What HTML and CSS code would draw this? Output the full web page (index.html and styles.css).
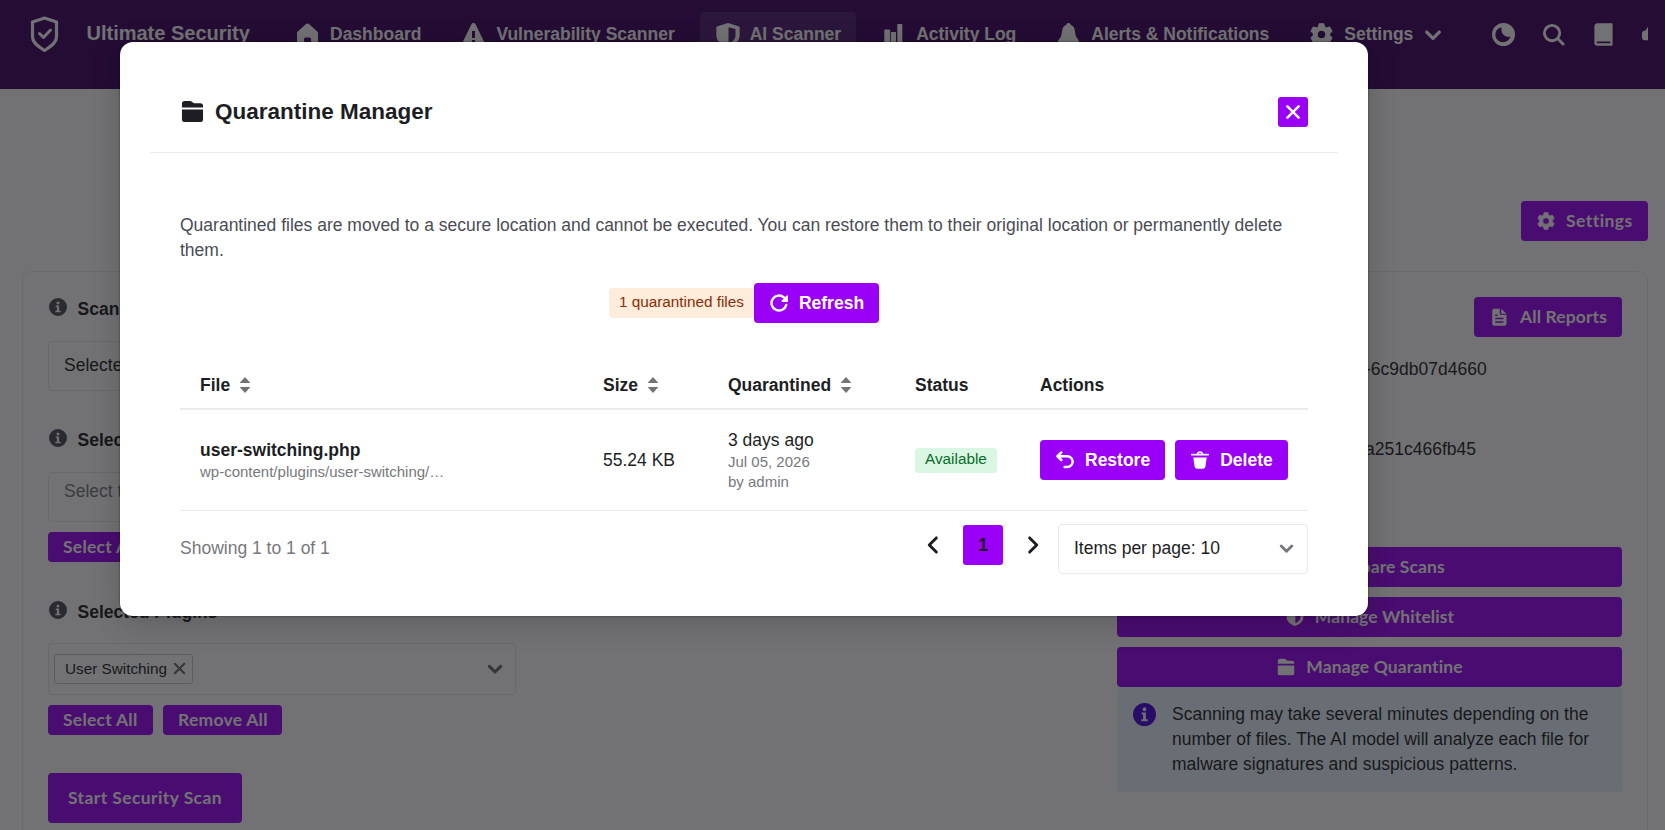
FILE: index.html
```html
<!DOCTYPE html>
<html lang="en">
<head>
<meta charset="utf-8">
<title>Ultimate Security</title>
<link rel="stylesheet" href="styles.css">
</head>
<body>
<svg class="sprite" aria-hidden="true">
  <symbol id="gear" viewBox="0.700 0.700 22.600 22.600"><path fill-rule="evenodd" d="M9.7 1.5h4.6l.7 3.1 2 1.1 3-1 2.3 4-2.3 2.2v2.2l2.3 2.2-2.3 4-3-1-2 1.1-.7 3.1H9.700l-.7-3.100-2-1.100-3 1-2.300-4L4 13.100v-2.200L1.700 8.700l2.300-4 3 1 2-1.100zM12 7.800a4.200 4.200 0 1 0 0 8.400 4.200 4.200 0 0 0 0-8.400z" stroke="currentColor" stroke-width="1" stroke-linejoin="round"/></symbol>
  <symbol id="info" viewBox="0 0 24 24"><path fill-rule="evenodd" d="M12 0a12 12 0 1 0 0 24 12 12 0 0 0 0-24zM12 4.500a2 2 0 1 1 0 4 2 2 0 0 1 0-4zM9 10h4.500v7H15.500v2H8.500v-2h2v-5H9z"/></symbol>
  <symbol id="folder" viewBox="0 0 24 24"><path d="M1 4a3 3 0 0 1 3-3h5c1.500 0 2.200.6 3.300 1.500C13.200 3.200 14 3.500 15 3.500h5a3 3 0 0 1 3 3v1.300H1zM1 10h22v10.500a2.500 2.500 0 0 1-2.500 2.500h-17A2.500 2.500 0 0 1 1 20.500z"/></symbol>
  <symbol id="chev" viewBox="0 0 24 24"><path d="M4.500 8.500 12 16l7.500-7.500" fill="none" stroke="currentColor" stroke-width="4" stroke-linecap="round" stroke-linejoin="round"/></symbol>
  <symbol id="chev-wide" viewBox="0 0 24 24"><path d="M3.500 8 12 16.500 20.500 8" fill="none" stroke="currentColor" stroke-width="3.500" stroke-linecap="round" stroke-linejoin="round"/></symbol>
  <symbol id="cross" viewBox="0 0 24 24"><path d="M4.500 4.500l15 15M19.500 4.500l-15 15" fill="none" stroke="currentColor" stroke-width="3.400" stroke-linecap="round"/></symbol>
  <symbol id="sort" viewBox="0 0 10 16"><path d="M5 0 9.800 5.200a.5.5 0 0 1-.4.9H.6a.5.5 0 0 1-.4-.9zM5 16 .2 10.800a.5.5 0 0 1 .4-.9h8.800a.5.5 0 0 1 .4.9z"/></symbol>
  <symbol id="shield" viewBox="0 0 24 24"><path fill-rule="evenodd" d="M12 .5 22 3.500c.8.300 1.200.8 1.200 1.600V12c0 6-4.700 9.500-11.200 12C5.500 21.500.8 18 .8 12V5.100c0-.8.400-1.300 1.200-1.600zM12.500 4.500v15.800c4.500-2 6.700-4.500 6.700-8.300V6.200z"/></symbol>
</svg>

<div class="page">
  <header class="topbar">
    <svg class="logo" viewBox="0 0 28 36"><path d="M14 2 26 6v15c0 5-4 8.500-12 13.500C6 29.500 2 26 2 21V6z" fill="none" stroke="currentColor" stroke-width="3.200" stroke-linejoin="round"/><path d="m9 17.500 4 4 7-7.500" fill="none" stroke="currentColor" stroke-width="3" stroke-linecap="round" stroke-linejoin="round"/></svg>
    <span class="brand">Ultimate Security</span>
    <nav class="nav">
      <a class="nav-item"><svg viewBox="0 0 25 25"><path d="M12.500 1.500c.8 0 1.300.3 2 .9l7.500 6.800c.8.700 1 1.300 1 2.300V21a2 2 0 0 1-2 2h-5v-6a1.500 1.500 0 0 0-1.500-1.500h-4A1.500 1.500 0 0 0 9 17v6H4a2 2 0 0 1-2-2v-9.500c0-1 .2-1.600 1-2.300l7.500-6.800c.7-.6 1.200-.9 2-.9z"/></svg>Dashboard</a>
      <a class="nav-item"><svg viewBox="0 0 25 25"><path fill-rule="evenodd" d="M12.500 1c1 0 1.700.5 2.200 1.500l9 18.500c.5 1.500-.3 2.500-1.700 2.500H3c-1.400 0-2.200-1-1.700-2.500l9-18.500C10.800 1.500 11.500 1 12.500 1zM11 9v7h3V9zM11 18v3h3v-3z"/></svg>Vulnerability Scanner</a>
      <a class="nav-item active"><svg viewBox="-0.500 -0.500 25 25"><use href="#shield"/></svg>AI Scanner</a>
      <a class="nav-item"><svg viewBox="0 0 25 25"><path d="M4 7.500h4.500c.4 0 .7.300.7.700V20H3.300V8.200c0-.4.300-.7.700-.7zM10.700 10h3.600c.4 0 .7.300.7.700V20h-5v-9.300c0-.4.300-.7.700-.7zM17 2h3.600c.4 0 .7.300.7.700V20h-5V2.700c0-.4.300-.7.700-.7zM2 20.500h21v2.500H2z"/></svg>Activity Log</a>
      <a class="nav-item"><svg viewBox="0 0 25 25"><path d="M12.500 1c1.300 0 2 .9 2.300 2 2.800 1 3.800 3 4.200 6.500.4 3.500 1 6 3.500 8.500.8 1 .3 2-.8 2H3.300c-1.100 0-1.600-1-.8-2C5 15.500 5.600 13 6 9.500c.4-3.500 1.400-5.500 4.200-6.500.3-1.100 1-2 2.300-2zM9.500 21.500h6c-.3 1.500-1.500 2.500-3 2.500s-2.700-1-3-2.500z"/></svg>Alerts &amp; Notifications</a>
      <a class="nav-item"><svg viewBox="-1 -1 26 26"><use href="#gear" width="24" height="24"/></svg>Settings<svg class="nav-chev"><use href="#chev"/></svg></a>
    </nav>
    <div class="tools">
      <svg viewBox="0 0 24 24"><path fill-rule="evenodd" d="M12 0a12 12 0 1 0 0 24 12 12 0 0 0 0-24zM10 4.500C8.800 10.500 13 15.800 19.500 14.200 17.800 18 15 20 11.500 20A7.800 7.800 0 0 1 10 4.500z"/></svg>
      <svg viewBox="0 0 24 24"><g fill="none" stroke="currentColor" stroke-width="3"><circle cx="10.500" cy="10.500" r="8"/><path d="m16.500 16.500 5.500 5.500" stroke-linecap="round"/></g></svg>
      <svg viewBox="0 0 24 24"><path fill-rule="evenodd" d="M6 .3h14.500c.7 0 1 .4 1 1V22.700c0 .7-.3 1-1 1H5.500a3 3 0 0 1-3-3V4A3.600 3.600 0 0 1 6 .3zM5.500 19.200c-.7 0-.7 2 0 2H19.200v-2z"/></svg>
      <svg viewBox="0 0 24 24"><path d="M4 7.500 7 2.500h5V18H2a3 3 0 0 1-2-3v-3.500C0 9.500.5 8 2.500 8z"/></svg>
    </div>
  </header>

  <div class="page-actions"><a class="btn alt settings"><svg><use href="#gear"/></svg>Settings</a></div>

  <main class="card">
    <section class="form">
      <div class="label"><svg><use href="#info"/></svg>Scan Type</div>
      <div class="field">Selected Items</div>
      <div class="label spaced"><svg><use href="#info"/></svg>Selected Themes</div>
      <div class="field placeholder">Select themes</div>
      <div class="mini-row"><a class="btn alt mini all">Select All</a></div>
      <div class="label spaced last"><svg><use href="#info"/></svg>Selected Plugins</div>
      <div class="field tags"><span class="tag">User Switching<svg><use href="#cross"/></svg></span><svg class="caret"><use href="#chev"/></svg></div>
      <div class="mini-row"><a class="btn alt mini all">Select All</a><a class="btn alt mini none">Remove All</a></div>
      <a class="btn alt start">Start Security Scan</a>
    </section>
    <aside class="side">
      <a class="btn alt reports"><svg viewBox="0 0 24 24"><path fill-rule="evenodd" d="M5 1h8v6.500c0 1 .5 1.500 1.500 1.500H22v12a2.500 2.500 0 0 1-2.500 2.500h-14A2.500 2.500 0 0 1 3 21V3a2 2 0 0 1 2-2zm10 0 7 6.500h-7zM7 8.500v2h3v-2zM7 13v2h11v-2zM7 17.500v2h11v-2z"/></svg>All Reports</a>
      <div class="ident">-6c9db07d4660</div>
      <div class="ident">a251c466fb45</div>
      <a class="btn alt wide first"><svg viewBox="0 0 24 24"><path d="M2 3h9v18H2zM13 3h9v18h-9z"/></svg>Compare Scans</a>
      <a class="btn alt wide"><svg><use href="#shield"/></svg>Manage Whitelist</a>
      <a class="btn alt wide"><svg><use href="#folder"/></svg>Manage Quarantine</a>
      <div class="notice"><svg><use href="#info"/></svg><p>Scanning may take several minutes depending on the number of files. The AI model will analyze each file for malware signatures and suspicious patterns.</p></div>
    </aside>
  </main>
</div>

<div class="overlay">
  <div class="modal">
    <div class="modal-head">
      <svg><use href="#folder"/></svg><h2>Quarantine Manager</h2>
      <a class="close"><svg><use href="#cross"/></svg></a>
    </div>
    <div class="modal-body">
      <p class="lead">Quarantined files are moved to a secure location and cannot be executed. You can restore them to their original location or permanently delete them.</p>
      <div class="summary"><span class="badge warn">1 quarantined files</span><a class="btn refresh"><svg viewBox="0 0 24 24"><path d="M21.700 14.500A10 10 0 1 1 18.500 4.400" fill="none" stroke="currentColor" stroke-width="3.200" stroke-linecap="round"/><path d="M24 2.500v7c0 .7-.4 1-1 1h-6.500c-1.200 0-1.600-1-.8-1.800l6.600-6.700c.7-.7 1.700-.4 1.700.5z"/></svg>Refresh</a></div>
      <div class="grid head">
        <div>File<svg class="sort"><use href="#sort"/></svg></div>
        <div>Size<svg class="sort"><use href="#sort"/></svg></div>
        <div>Quarantined<svg class="sort"><use href="#sort"/></svg></div>
        <div>Status</div>
        <div>Actions</div>
      </div>
      <div class="grid row">
        <div><b class="name">user-switching.php</b><small>wp-content/plugins/user-switching/…</small></div>
        <div>55.24 KB</div>
        <div><span class="ago">3 days ago</span><small>Jul 05, 2026</small><small>by admin</small></div>
        <div><span class="badge ok">Available</span></div>
        <div class="acts">
          <a class="btn"><svg viewBox="0 0 24 24"><path d="M7 2 2 7l5 5M2.500 7H15a7.200 7.200 0 0 1 0 14.400h-3.500" fill="none" stroke="currentColor" stroke-width="3.300" stroke-linecap="round" stroke-linejoin="round"/></svg>Restore</a>
          <a class="btn"><svg viewBox="0 0 24 24"><path d="M8 3.500C8 1.500 9 .5 10.500.5h3c1.500 0 2.500 1 2.500 3h7c.6 0 1 .4 1 1s-.4 1.500-1 1.500H1c-.6 0-1-.900-1-1.500s.4-1 1-1zM10 3.500h4c0-.6-.3-1-1-1h-2c-.7 0-1 .4-1 1zM3 8.500h18l-1.800 12.300c-.3 2-1.200 2.700-3.200 2.700H8c-2 0-2.900-.7-3.200-2.700z" fill-rule="evenodd"/></svg>Delete</a>
        </div>
      </div>
      <div class="foot">
        <span class="count">Showing 1 to 1 of 1</span>
        <div class="pager"><svg class="prev"><use href="#chev-wide"/></svg><span class="current">1</span><svg class="next"><use href="#chev-wide"/></svg></div>
        <div class="per">Items per page: 10<svg><use href="#chev"/></svg></div>
      </div>
    </div>
  </div>
</div>
</body>
</html>
```
FILE: styles.css
```css
* { box-sizing: border-box; }
body {
  margin: 0;
  height: 830px;
  overflow: hidden;
  position: relative;
  background: #fff;
  color: #1d1e24;
  font: 17.5px/25px "Liberation Sans", Arial, sans-serif;
}
svg { fill: currentColor; flex: none; display: block; }
.sprite { position: absolute; width: 0; height: 0; }
p, h2 { margin: 0; }

.page { height: 830px; overflow: hidden; }
.topbar {
  height: 89px;
  padding: 12px 17px 0 30px;
  display: flex;
  align-items: flex-start;
  overflow: hidden;
  background: #3c0061;
  color: #fff;
  font-weight: 700;
}
.logo { width: 29px; height: 36px; margin-top: 4px; }
.brand { width: 221px; padding-left: 27.5px; font-size: 20px; line-height: 43px; white-space: nowrap; }
.nav { display: flex; gap: 10px; }
.nav-item {
  display: flex;
  align-items: center;
  gap: 10px;
  height: 45px;
  padding: 0 15px;
  border-radius: 4px;
  white-space: nowrap;
}
.nav-item svg { width: 25px; height: 25px; }
.nav-item .nav-chev { width: 20px; height: 20px; }
.active { background: #511d73; }
.tools { flex: 1; min-width: 0; margin-left: 34px; display: flex; gap: 27px; overflow: hidden; padding-top: 11px; }
.tools svg { width: 23px; height: 23px; }

.btn {
  display: flex;
  align-items: center;
  gap: 11px;
  height: 40px;
  padding: 0 15px;
  border-radius: 4px;
  background: #9900f5;
  color: #fff;
  font-weight: 700;
  white-space: nowrap;
}
.btn svg { width: 18px; height: 18px; margin-left: 1px; }
.alt { padding-bottom: 1px; font-family: Lato, sans-serif; font-variant-ligatures: none; }
.settings { width: 127px; letter-spacing: .45px; }

.page-actions { display: flex; justify-content: flex-end; padding: 112px 17px 0; }
.card {
  display: flex;
  justify-content: space-between;
  margin: 30px 17px 0 22px;
  padding: 25px;
  height: 640px;
  border: 1px solid #ececee;
  border-radius: 10px;
}
.form { width: 468px; }
.label { display: flex; gap: 10.5px; height: 25px; margin-bottom: 19px; font-weight: 700; }
.label svg { width: 18px; height: 18px; margin: 1px 0 0 1px; color: #4b4c54; }
.label.spaced { margin-top: 37px; }
.label.last { margin-top: 38px; margin-bottom: 18px; }
.field { height: 50px; padding: 0 15px; border: 1px solid #e8e8ea; border-radius: 4px; line-height: 47px; }
.placeholder { color: #77787c; line-height: 37px; }
.tags { display: flex; align-items: center; justify-content: space-between; height: 52px; padding: 0 11px 1px 5px; }
.tag { display: flex; align-items: center; gap: 5px; height: 30px; padding: 0 5px 0 10px; border: 1px solid #c8c8cb; border-radius: 3px; font-size: 15.3125px; line-height: 26px; }
.tag svg { width: 15px; height: 15px; color: #68696f; }
.caret { width: 18px; height: 18px; color: #68696f; }
.mini-row { display: flex; gap: 10px; margin-top: 10px; }
.mini { height: 30px; letter-spacing: .25px; }
.all { width: 105px; }
.none { width: 119px; }
.start { width: 194px; height: 50px; margin-top: 38px; padding-bottom: 2px; justify-content: center; letter-spacing: .4px; }

.side { width: 505px; }
.reports { width: 148px; margin-left: auto; margin-bottom: 20px; gap: 12px; letter-spacing: .1px; }
.ident { padding-left: 248px; margin-bottom: 55px; }
.wide { justify-content: center; margin-bottom: 10px; letter-spacing: .1px; }
.wide.first { margin-top: 85px; }
.wide:nth-last-child(2) { margin-bottom: 0; }
.notice { display: flex; gap: 16px; padding: 15px 20px 15px 16px; height: 105px; background: #e8f5ff; border-radius: 4px; }
.notice svg { width: 23px; height: 23px; margin-top: 1px; color: #4a00db; }

.overlay { position: absolute; inset: 0; padding-top: 42px; background: rgba(20, 20, 24, .6); }
.modal {
  width: 1248px;
  height: 574px;
  margin-left: 120px;
  padding: 0 30px;
  border-radius: 13px;
  background: #fff;
  box-shadow: 0 0 2px rgba(0, 0, 0, .6), 0 6px 30px rgba(0, 0, 0, .18);
}
.modal-head { display: flex; align-items: center; gap: 13px; height: 111px; padding: 29px 30px 0; border-bottom: 1px solid #ebebed; }
.modal-head > svg { width: 23px; height: 23px; margin-left: 1px; }
.modal-head h2 { flex: 1; margin-left: -2px; font-size: 22.5px; line-height: 30px; }
.close { width: 30px; height: 30px; padding: 6px; border-radius: 3px; background: #9900f5; color: #fff; }
.close svg { width: 18px; height: 18px; }
.modal-body { padding: 60px 30px 0; }
.lead { color: #4b4c54; }
.summary { display: flex; align-items: center; justify-content: center; margin-top: 20px; }
.badge { display: block; width: max-content; padding: 0 10px; border-radius: 4px; font-size: 15.3125px; }
.warn { height: 30px; line-height: 28px; border-radius: 4px 0 0 4px; background: #ffecdb; color: #8a2c06; }
.ok { height: 25px; line-height: 22px; background: #d9f7e3; color: #0b6b2a; }
.grid { display: grid; grid-template-columns: 403px 125px 187px 125px 1fr; align-items: center; padding: 0 20px; }
.head { height: 75px; padding-top: 27px; margin-top: 12px; border-bottom: 2px solid #ebebed; font-weight: 700; }
.head > div { display: flex; align-items: center; gap: 10px; }
.sort { width: 10px; height: 16px; color: #737478; }
.row { height: 101px; border-bottom: 1px solid #ebebed; }
.name, .ago { display: block; height: 23px; line-height: 22px; }
small { display: block; color: #77787c; font-size: 15px; line-height: 20px; }
.acts { display: flex; gap: 10px; }
.foot { display: flex; align-items: center; height: 50px; margin-top: 13px; }
.count { flex: 1; margin-bottom: 1px; color: #77787c; }
.pager { display: flex; align-items: center; height: 40px; margin-bottom: 8px; }
.prev { width: 20px; height: 20px; transform: rotate(90deg); }
.next { width: 20px; height: 20px; transform: rotate(-90deg); margin-right: 15px; }
.current { width: 40px; margin: 0 20px; line-height: 40px; border-radius: 3px; background: #9900f5; text-align: center; font-weight: 700; }
.per { display: flex; align-items: center; justify-content: space-between; width: 250px; height: 50px; padding: 0 12px 1px 15px; border: 1px solid #ebebed; border-radius: 4px; }
.per svg { width: 17px; height: 17px; color: #77787c; }
```
